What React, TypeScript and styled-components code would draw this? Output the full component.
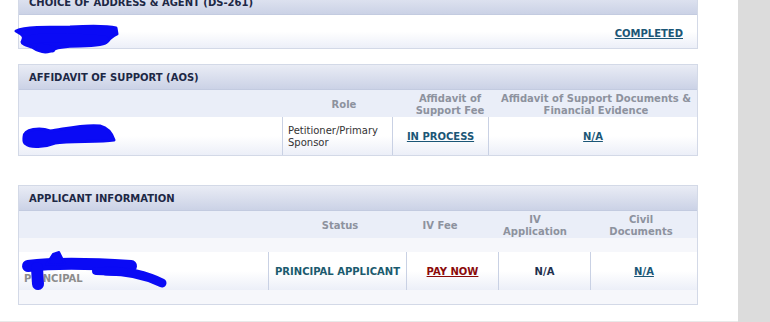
import React from 'react';
import styled, { createGlobalStyle } from 'styled-components';

const GlobalStyle = createGlobalStyle`
  html, body {
    margin: 0;
    padding: 0;
    background: #fff;
  }
  body {
    font-family: 'DejaVu Sans', Verdana, sans-serif;
    font-size: 10px;
  }
`;

const Page = styled.div`
  display: flex;
  width: 770px;
  height: 322px;
  overflow: hidden;
`;

const Main = styled.main`
  width: 738px;
  height: 321px;
  border-bottom: 1px solid #e9e9e9;
  overflow: hidden;
  background: #fff;
`;

const Side = styled.aside`
  flex: 1;
  background: #dcdcdc;
`;

const Stack = styled.div`
  display: flex;
  flex-direction: column;
  width: 680px;
  margin: -11px 0 0 18px;
`;

const Panel = styled.section<{ $gap?: number }>`
  margin-top: ${({ $gap }) => $gap ?? 0}px;
  border: 1px solid #d3d9e7;
  background: #fff;
`;

const PanelHeader = styled.div`
  height: 24px;
  display: flex;
  align-items: center;
  padding-left: 10px;
  background: linear-gradient(#e9ecf5, #cbd2e6);
  border-bottom: 1px solid #c3cbe0;
  color: #1d2845;
  font-weight: bold;
  font-size: 10px;
`;

const StatusBody = styled.div`
  position: relative;
  height: 33px;
  box-sizing: border-box;
  display: flex;
  align-items: center;
  justify-content: space-between;
  padding: 3px 14px 0 6px;
  background: linear-gradient(#fff 0%, #fff 50%, #eceff8 100%);
`;

const ColumnHeads = styled.div<{ $cols: string }>`
  display: grid;
  grid-template-columns: ${({ $cols }) => $cols};
  height: 27px;
  background: #eaeef8;
`;

const Head = styled.div`
  display: flex;
  align-items: center;
  justify-content: center;
  padding-top: 2px;
  text-align: center;
  color: #8d929e;
  font-weight: bold;
  line-height: 12px;
`;

const DataRow = styled.div<{ $cols: string }>`
  display: grid;
  grid-template-columns: ${({ $cols }) => $cols};
  height: 38px;
  background: linear-gradient(#fff 0%, #fff 50%, #eceff8 100%);
`;

const Spacer = styled.div`
  height: 14px;
  background: #f6f7fb;
`;

const Cell = styled.div<{ $align?: 'left' | 'center'; $divider?: boolean }>`
  position: relative;
  display: flex;
  flex-direction: column;
  justify-content: center;
  align-items: ${({ $align }) => ($align === 'left' ? 'flex-start' : 'center')};
  padding: 2px 5px 0;
  border-left: ${({ $divider }) => ($divider ? '1px solid #c9d1e4' : 'none')};
  line-height: 12px;
  color: #333;
`;

const NameText = styled.span`
  color: #2a2a2a;
`;

const RoleText = styled.span`
  color: #8c8c8c;
  font-weight: bold;
  line-height: 13px;
`;

const Link = styled.a<{ $tone?: 'teal' | 'red' }>`
  color: ${({ $tone }) => ($tone === 'red' ? '#8a0a0a' : '#1b5676')};
  font-weight: bold;
  text-decoration: underline;
  cursor: pointer;
`;

const Plain = styled.span<{ $tone?: 'navy' | 'teal' }>`
  color: ${({ $tone }) => ($tone === 'teal' ? '#1b5a6e' : '#1e2f4e')};
  font-weight: bold;
`;

const Redaction = styled.svg<{ $x: number; $y: number }>`
  position: absolute;
  left: ${({ $x }) => $x}px;
  top: ${({ $y }) => $y}px;
  overflow: visible;
  z-index: 2;
`;

const INK = '#0a0af5';

const AOS_HEAD = '264px 122px 90px 1fr';
const AOS_DATA = '263px 110px 96px 1fr';
const APP_HEAD = '266px 110px 90px 100px 1fr';
const APP_DATA = '249px 138px 92px 92px 1fr';

export default function App() {
  return (
    <>
      <GlobalStyle />
      <Page>
        <Main>
          <Stack>
            <Panel>
              <PanelHeader>CHOICE OF ADDRESS &amp; AGENT (DS-261)</PanelHeader>
              <StatusBody>
                <NameText>1 Agent</NameText>
                <Redaction $x={-5} $y={10} width={106} height={30} viewBox="14 25 106 30">
                  <g fill={INK} stroke={INK} strokeWidth={3} strokeLinejoin="round">
                    <path d="M16 31 C25 27 45 27 70 27 C90 26 108 26 116 28 L117 34 C113 36 110 38 108 41 C106 44 95 46 80 46 C66 46 56 47 50 51 C45 53 38 51 32 47 C26 45 22 44 22 42 C23 39 25 37 21 34 Z" />
                  </g>
                  <path d="M28 40 C45 36 80 38 104 40" stroke={INK} strokeWidth={9} strokeLinecap="round" fill="none" />
                  <path d="M40 47 L52 49" stroke={INK} strokeWidth={7} strokeLinecap="round" fill="none" />
                </Redaction>
                <Link>COMPLETED</Link>
              </StatusBody>
            </Panel>

            <Panel $gap={15}>
              <PanelHeader>AFFIDAVIT OF SUPPORT (AOS)</PanelHeader>
              <ColumnHeads $cols={AOS_HEAD}>
                <Head />
                <Head>Role</Head>
                <Head>
                  Affidavit of
                  <br />
                  Support Fee
                </Head>
                <Head>
                  Affidavit of Support Documents &amp;
                  <br />
                  Financial Evidence
                </Head>
              </ColumnHeads>
              <DataRow $cols={AOS_DATA}>
                <Cell $align="left">
                  <NameText>Sponsor I</NameText>
                  <Redaction $x={1} $y={5} width={100} height={30} viewBox="20 122 100 30">
                    <path
                      d="M24 137 C24 129 40 127 50 131 C65 129 85 124 100 126 C108 128 112 134 114 140 C100 142 70 141 55 143 C45 147 30 148 26 144 C23 142 24 140 24 137 Z"
                      fill={INK}
                      stroke={INK}
                      strokeWidth={3}
                      strokeLinejoin="round"
                    />
                  </Redaction>
                </Cell>
                <Cell $align="left" $divider>
                  Petitioner/Primary
                  <br />
                  Sponsor
                </Cell>
                <Cell $divider>
                  <Link>IN PROCESS</Link>
                </Cell>
                <Cell $divider>
                  <Link>N/A</Link>
                </Cell>
              </DataRow>
            </Panel>

            <Panel $gap={29}>
              <PanelHeader>APPLICANT INFORMATION</PanelHeader>
              <ColumnHeads $cols={APP_HEAD}>
                <Head />
                <Head>Status</Head>
                <Head>IV Fee</Head>
                <Head>
                  IV
                  <br />
                  Application
                </Head>
                <Head>
                  Civil
                  <br />
                  Documents
                </Head>
              </ColumnHeads>
              <Spacer />
              <DataRow $cols={APP_DATA}>
                <Cell $align="left">
                  <NameText>Applicant Name</NameText>
                  <RoleText>PRINCIPAL</RoleText>
                  <Redaction $x={1} $y={-4} width={150} height={42} viewBox="20 248 150 42">
                    <path d="M28 266 C60 262 100 264 131 266" stroke={INK} strokeWidth={12} strokeLinecap="round" fill="none" />
                    <path d="M46 265 L53 254 L59 252 L65 264 Z" fill={INK} stroke={INK} strokeWidth={2} strokeLinejoin="round" />
                    <path d="M106 271 C128 271 148 276 162 283" stroke={INK} strokeWidth={9} strokeLinecap="round" fill="none" />
                    <path d="M37 268 L38 284" stroke={INK} strokeWidth={12} strokeLinecap="round" fill="none" />
                    <path d="M96 271 L124 272" stroke={INK} strokeWidth={8} strokeLinecap="round" fill="none" />
                  </Redaction>
                </Cell>
                <Cell $divider>
                  <Plain $tone="teal">PRINCIPAL APPLICANT</Plain>
                </Cell>
                <Cell $divider>
                  <Link $tone="red">PAY NOW</Link>
                </Cell>
                <Cell $divider>
                  <Plain>N/A</Plain>
                </Cell>
                <Cell $divider>
                  <Link>N/A</Link>
                </Cell>
              </DataRow>
              <Spacer />
            </Panel>
          </Stack>
        </Main>
        <Side />
      </Page>
    </>
  );
}
